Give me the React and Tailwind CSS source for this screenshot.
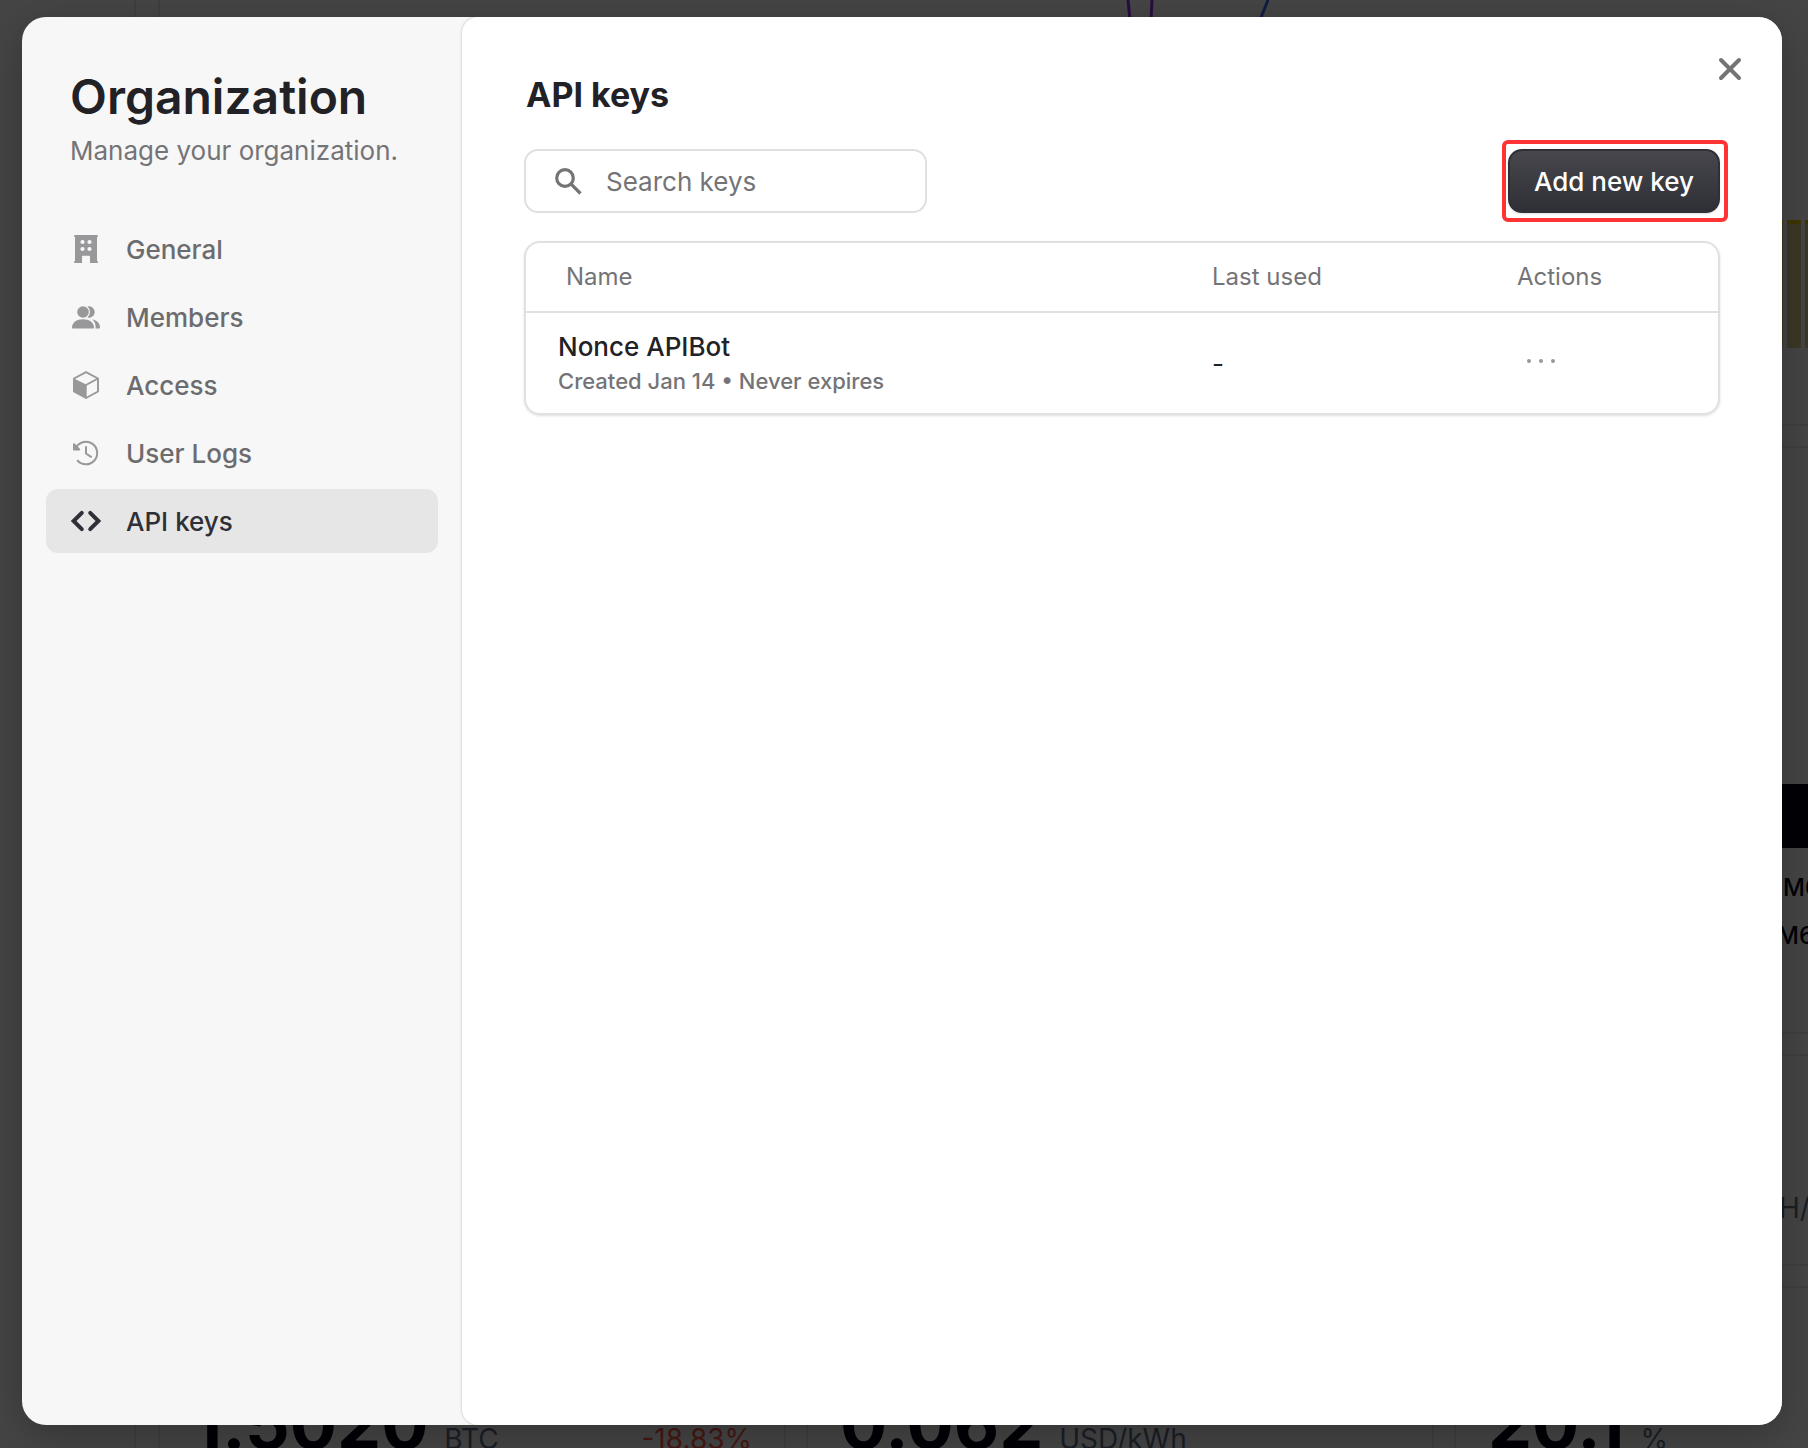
import React from "react";

const FONT = "font-['Inter','Liberation_Sans',sans-serif]";

function BuildingIcon() {
  return (
    <svg viewBox="0 0 28 28" className="size-7" fill="currentColor" fillRule="evenodd">
      <path d="M2.800 0h22.400c.5 0 .8.4.8.9s-.3.9-.8.9H25v24.300h.2c.5 0 .8.4.8.9s-.3 1-.8 1H18v-6.200c0-.6-.4-1-1-1h-6c-.6 0-1 .4-1 1V28H2.800c-.5 0-.8-.5-.8-1s.3-.9.8-.9H3V1.800h-.2c-.5 0-.8-.4-.8-.9s.3-.9.8-.9z M10.500 4.900a2.100 2.100 0 1 0 0 4.200 2.100 2.100 0 0 0 0-4.200z M17.500 4.900a2.100 2.100 0 1 0 0 4.200 2.100 2.100 0 0 0 0-4.200z M10.500 11.900a2.100 2.100 0 1 0 0 4.200 2.100 2.100 0 0 0 0-4.200z M17.500 11.900a2.100 2.100 0 1 0 0 4.200 2.100 2.100 0 0 0 0-4.200z" />
    </svg>
  );
}

function MembersIcon() {
  return (
    <svg viewBox="0 0 28 28" className="size-7" fill="currentColor">
      <circle cx="11" cy="9" r="5.800" />
      <path d="M15.400 3.500a6 6 0 0 1 7.400 5.500 6 6 0 0 1-7.400 5.500c3.400-3 3.400-8 0-11z" />
      <path d="M0 24.500C0 19.500 4.500 16.200 11 16.200s11 3.300 11 8.300c0 .6-.4 1-1 1H1c-.6 0-1-.4-1-1z" />
      <path d="M20.300 16.500c4.700.6 7.700 3.800 7.700 8 0 .6-.4 1-1 1h-3.500c.6-3.600-.6-6.800-3.200-9z" />
    </svg>
  );
}

function BoxIcon() {
  return (
    <svg viewBox="0 0 28 28" className="size-7" fill="none">
      <path d="M14 1.200 26 7.500v13L14 27 2 20.500v-13z" stroke="currentColor" strokeWidth="1.900" strokeLinejoin="round" />
      <path d="M26 7.500 14 14" stroke="currentColor" strokeWidth="1.900" />
      <path d="M1.500 7.300 14.700 13.800V27.800L1.500 20.800z" fill="currentColor" />
    </svg>
  );
}

function HistoryIcon() {
  return (
    <svg viewBox="0 0 28 28" className="size-7" fill="none" stroke="currentColor" strokeWidth="2" strokeLinecap="round" strokeLinejoin="round">
      <path d="M4.200 8.200A11.300 11.300 0 1 1 5.700 21.800" />
      <path d="M14 8v6.500l5 3.300" />
      <path d="M2 5.200v5.300h5.200z" fill="currentColor" />
    </svg>
  );
}

function CodeIcon() {
  return (
    <svg viewBox="0 0 28 28" className="size-7 overflow-visible" fill="none" stroke="currentColor" strokeWidth="4" strokeLinecap="round" strokeLinejoin="miter">
      <path d="M9.800 5.800 1.600 14l8.200 8.200" />
      <path d="M18.200 5.800l8.200 8.200-8.200 8.200" />
    </svg>
  );
}

function SearchIcon() {
  return (
    <svg viewBox="0 0 28 28" className="size-7" fill="none" stroke="currentColor" strokeWidth="3.200">
      <circle cx="11" cy="11" r="8.300" />
      <path d="M16.900 16.900 26.500 26.500" />
    </svg>
  );
}

const NAV_ITEMS = [
  { label: "General", Icon: BuildingIcon },
  { label: "Members", Icon: MembersIcon },
  { label: "Access", Icon: BoxIcon },
  { label: "User Logs", Icon: HistoryIcon },
  { label: "API keys", Icon: CodeIcon, active: true },
];

const STATS = [
  { value: "1.5020", unit: "BTC", change: "-18.83%" },
  { value: "0.062", unit: "USD/kWh" },
  { value: "20.1", unit: "%" },
];

/* 모달 뒤 대시보드 */
function Dashboard() {
  return (
    <div className="flex h-screen gap-[22px] overflow-hidden bg-white text-slate-950">
      <aside className="w-34 shrink-0 border-r-2 border-slate-200" />
      <main className="flex w-[1924px] shrink-0 flex-col gap-5">
        <section className="flex h-[426px] shrink-0 border-x-2 border-b-2 border-slate-200">
          <svg viewBox="0 0 1609 424" className="h-[424px] w-[1609px] shrink-0" fill="none" strokeWidth="3">
            <path d="M968 0l2 20 M992 0l-1 20" stroke="#9333ea" />
            <path d="M1108 0l-8 20" stroke="#3b6cf6" />
          </svg>
          <div className="flex gap-1 pt-[220px]">
            {[0, 1, 2, 3].map((n) => (
              <div key={n} className="h-32 w-3.5 border-t-4 border-[#e3c800] bg-[#decf94]" />
            ))}
          </div>
        </section>

        <section className="h-[588px] shrink-0 border-2 border-slate-200 pt-[336px]">
          <div className="h-16 bg-[#020617]" />
          <p className="pt-6 pl-[1623px] text-2xl leading-8 font-medium">M60S</p>
          <p className="pt-4 pl-[1617px] text-2xl leading-8 font-medium">M60S</p>
        </section>

        <section className="h-[212px] shrink-0 border-2 border-slate-200 pt-[134px]">
          <p className="pl-[1619px] text-[28px] leading-9 text-slate-500">H/s</p>
        </section>

        <section className="grid shrink-0 grid-cols-3 gap-5">
          {STATS.map((s) => (
            <div key={s.value} className="flex h-60 items-baseline gap-4 border-2 border-slate-200 px-8 pt-24">
              <span className="text-[70px] leading-[80px] font-bold">{s.value}</span>
              <span className="text-[28px] text-slate-500">{s.unit}</span>
              {s.change && <span className="ml-auto text-[28px] text-[#ff5a48]">{s.change}</span>}
            </div>
          ))}
        </section>
      </main>
    </div>
  );
}

function Sidebar() {
  return (
    <aside className="w-[440px] shrink-0 px-6 pt-[50px]">
      <header className="px-6">
        <h1 className="text-5xl leading-[60px] font-semibold text-[#212126]">Organization</h1>
        <p className="text-[26px] leading-[48px] text-[#747477]">Manage your organization.</p>
      </header>
      <nav className="mt-[42px] flex flex-col gap-1">
        {NAV_ITEMS.map(({ label, Icon, active }) => (
          <button
            key={label}
            className={
              active
                ? "flex h-16 items-center gap-[26px] rounded-xl bg-[#e6e6e6] px-[26px] text-[26px] font-medium text-[#2f3037]"
                : "flex h-16 items-center gap-[26px] rounded-xl px-[26px] text-[26px] font-medium text-[#6c6c6f]"
            }
          >
            <span className={active ? "text-[#2f3037]" : "text-[#98989a]"}>
              <Icon />
            </span>
            {label}
          </button>
        ))}
      </nav>
    </aside>
  );
}

function KeysTable() {
  return (
    <div className="mt-7 overflow-hidden rounded-2xl border-2 border-[#e0e0e0] shadow-sm">
      <table className="w-full table-fixed text-left">
        <thead>
          <tr className="h-[69px] border-b-2 border-[#e0e0e0] text-2xl text-[#747477]">
            <th className="pl-10 font-normal">Name</th>
            <th className="w-[305px] font-normal">Last used</th>
            <th className="w-[201px] font-normal">Actions</th>
          </tr>
        </thead>
        <tbody>
          <tr className="h-[101px]">
            <td className="pl-8">
              <p className="text-[26px] leading-9 font-medium text-[#212126]">Nonce APIBot</p>
              <p className="text-[22px] leading-8 font-medium text-[#747477]">Created Jan 14 • Never expires</p>
            </td>
            <td className="text-[26px] text-[#212126]">-</td>
            <td className="pb-1">
              <button aria-label="Key actions" className="flex h-12 items-center px-2.5 text-[#98989a]">
                <svg viewBox="0 0 28 4" className="h-1 w-7" fill="currentColor">
                  <circle cx="2" cy="2" r="2" />
                  <circle cx="14" cy="2" r="2" />
                  <circle cx="26" cy="2" r="2" />
                </svg>
              </button>
            </td>
          </tr>
        </tbody>
      </table>
    </div>
  );
}

export default function App() {
  return (
    <div className={`relative ${FONT}`}>
      <Dashboard />
      <div className="absolute inset-0 flex bg-black/73 pt-[17px] pr-[26px] pb-[23px] pl-[22px]">
        <div role="dialog" aria-label="Organization" className="relative flex flex-1 overflow-hidden rounded-3xl bg-[#f7f7f7] shadow-[0_10px_40px_rgba(0,0,0,0.25)]">
          <Sidebar />
          <main className="min-w-0 flex-1 rounded-l-2xl bg-white px-[62px] pt-14 shadow-[0_0_2px_1px_rgba(0,0,0,0.12)]">
            <h2 className="pl-0.5 text-[34px] leading-[44px] font-bold text-[#212126]">API keys</h2>

            {/* 검색 + 추가 버튼 */}
            <div className="mt-8 flex items-center justify-between">
              <label className="flex h-16 w-[403px] items-center gap-6 rounded-[14px] border-2 border-[#e0e0e0] px-7 text-[#747477]">
                <SearchIcon />
                <input
                  type="text"
                  aria-label="Search keys"
                  placeholder="Search keys"
                  className="min-w-0 flex-1 text-[26px] outline-none placeholder:text-[#747477]"
                />
              </label>
              <div className="-my-[9px] -mr-2 rounded-md border-4 border-[#ff3333] py-[5px] pr-1 pl-0.5">
                <button className="block h-16 rounded-[14px] border-2 border-[#2f3037] bg-linear-to-b from-[#47474d] to-[#2f3037] px-6 text-[26px] font-medium text-white shadow-sm">
                  Add new key
                </button>
              </div>
            </div>

            <KeysTable />
          </main>
          <button aria-label="Close" className="absolute top-8 right-8 flex size-10 items-center justify-center text-[#747477]">
            <svg viewBox="0 0 24 24" className="size-6" fill="none" stroke="currentColor" strokeWidth="4" strokeLinecap="round">
              <path d="M3 3l18 18M21 3L3 21" />
            </svg>
          </button>
        </div>
      </div>
    </div>
  );
}
